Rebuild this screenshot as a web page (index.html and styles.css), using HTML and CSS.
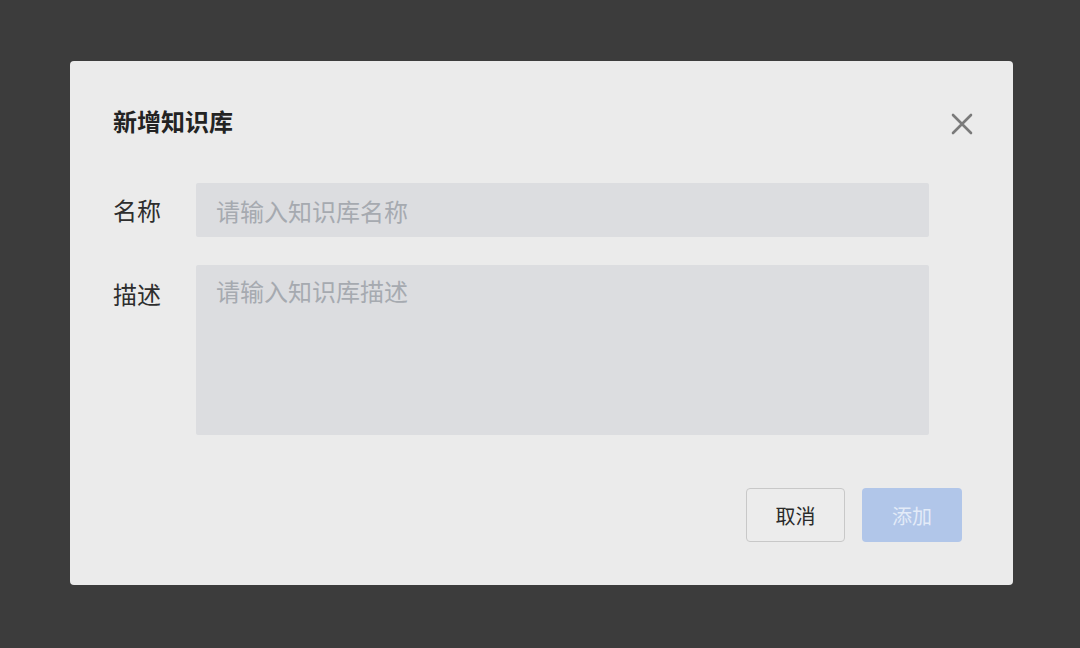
FILE: index.html
```html
<!DOCTYPE html>
<html lang="zh-CN">
<head>
<meta charset="utf-8">
<title>新增知识库</title>
<link rel="stylesheet" href="styles.css">
</head>
<body>
<div class="dialog">
  <div class="header">
    <div class="title">新增知识库</div>
    <button class="close" aria-label="关闭">
      <svg width="22" height="22" viewBox="0 0 22 22"><path d="M2 2 L20 20 M20 2 L2 20" stroke="#7a7a7a" stroke-width="2.6" stroke-linecap="round" fill="none"/></svg>
    </button>
  </div>
  <div class="form">
    <div class="row row-center">
      <label class="label">名称</label>
      <input class="field" type="text" placeholder="请输入知识库名称">
    </div>
    <div class="row row-top">
      <label class="label label-top">描述</label>
      <textarea class="field area" placeholder="请输入知识库描述"></textarea>
    </div>
  </div>
  <div class="footer">
    <button class="btn btn-cancel">取消</button>
    <button class="btn btn-add">添加</button>
  </div>
</div>
</body>
</html>
```
FILE: styles.css
```css
html, body {
  margin: 0;
  padding: 0;
  background: #3c3c3c;
  width: 1080px;
  height: 648px;
  overflow: hidden;
  font-family: "Noto Sans CJK SC", "Noto Sans", sans-serif;
}
.dialog {
  margin: 61px 0 0 70px;
  width: 943px;
  height: 524px;
  box-sizing: border-box;
  background: #ebebeb;
  border-radius: 4px;
  display: flex;
  flex-direction: column;
}
.header {
  display: flex;
  justify-content: space-between;
  align-items: center;
  padding: 44px 40px 0 43px;
  height: 32px;
}
.title {
  font-size: 24px;
  font-weight: 700;
  color: #232323;
  line-height: 32px;
}
.close {
  border: 0;
  background: transparent;
  padding: 0;
  width: 22px;
  height: 22px;
  display: flex;
  cursor: pointer;
  margin-top: 5px;
}
.form {
  margin-top: 46px;
  padding: 0 84px 0 43px;
  display: flex;
  flex-direction: column;
  gap: 28px;
}
.row {
  display: flex;
}
.row-center { align-items: center; }
.row-top { align-items: flex-start; }
.label {
  width: 83px;
  flex: none;
  font-size: 24px;
  line-height: 32px;
  color: #2e2e2e;
}
.label-top { padding-top: 13px; }
.field {
  flex: 1;
  box-sizing: border-box;
  border: 0;
  outline: none;
  border-radius: 2px;
  background: #dcdde0;
  font-family: inherit;
  font-size: 24px;
  color: #333;
  height: 54px;
  padding: 0 20px;
  margin: 0;
}
.area {
  height: 170px;
  padding: 10px 20px;
  line-height: 32px;
  resize: none;
  display: block;
}
.field::placeholder {
  color: #a6aab0;
}
.footer {
  margin-top: 53px;
  padding-right: 51px;
  display: flex;
  justify-content: flex-end;
  gap: 17px;
}
.btn {
  width: 100px;
  height: 54px;
  box-sizing: border-box;
  border-radius: 4px;
  font-family: inherit;
  font-size: 20px;
  padding: 0;
  cursor: pointer;
}
.btn-cancel {
  width: 99px;
  background: #ececec;
  border: 1.5px solid #c8c8c8;
  color: #2a2a2a;
}
.btn-add {
  background: #b1c6e9;
  border: 0;
  color: #e3ebf8;
}
```
